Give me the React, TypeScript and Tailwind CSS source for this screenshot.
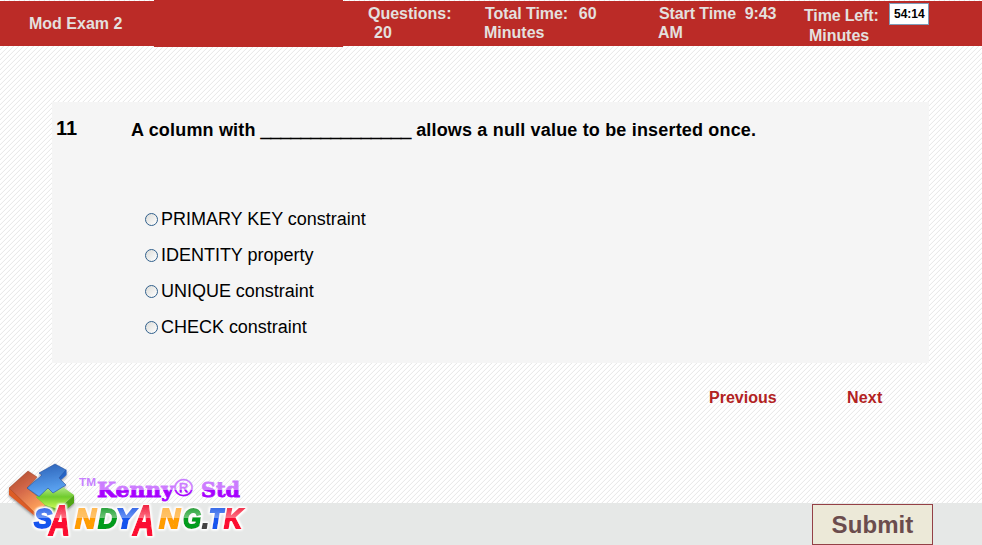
import React from "react";

const options = [
  "PRIMARY KEY constraint",
  "IDENTITY property",
  "UNIQUE constraint",
  "CHECK constraint",
];

const letters = [
  { c: "S", x: 34, y: 527.5, w: 18, fill: "url(#blue)", s: 28 },
  { c: "A", x: 49, y: 535, w: 21, fill: "url(#red)", s: 42 },
  { c: "N", x: 75, y: 527.5, w: 21, fill: "url(#orange)", s: 28 },
  { c: "D", x: 98, y: 527.5, w: 19, fill: "url(#green)", s: 28 },
  { c: "Y", x: 116, y: 527.5, w: 19, fill: "url(#blue)", s: 28 },
  { c: "A", x: 133, y: 535, w: 21, fill: "url(#red)", s: 42 },
  { c: "N", x: 159, y: 527.5, w: 21, fill: "url(#orange)", s: 28 },
  { c: "G", x: 183, y: 527.5, w: 18, fill: "url(#green)", s: 28 },
  { c: ".", x: 202, y: 527.5, w: 7, fill: "#444444", s: 28 },
  { c: "T", x: 209, y: 527.5, w: 14, fill: "url(#blue)", s: 28 },
  { c: "K", x: 224, y: 527.5, w: 18, fill: "url(#red)", s: 28 },
];

function Fade({ id, top, mid, low }: { id: string; top: string; mid: string; low: string }) {
  return (
    <linearGradient id={id} gradientUnits="userSpaceOnUse" x1="0" y1="505" x2="0" y2="532">
      <stop offset="0" stopColor={top} />
      <stop offset="0.48" stopColor={mid} />
      <stop offset="0.5" stopColor={low} />
      <stop offset="1" stopColor={low} />
    </linearGradient>
  );
}

function Stripes() {
  return (
    <svg className="absolute inset-0" width="982" height="545" aria-hidden="true">
      <defs>
        <pattern id="hatch" width="5" height="5" patternUnits="userSpaceOnUse">
          <rect width="5" height="5" fill="#ffffff" />
          {[0, 1, 2, 3, 4].map((n) => (
            <rect key={n} x={4 - n} y={n} width="1" height="1" fill="#eaeaea" shapeRendering="crispEdges" />
          ))}
          {[0, 1, 2, 3, 4].map((n) => (
            <rect key={n} x={(8 - n) % 5} y={n} width="1" height="1" fill="#fbfbfb" shapeRendering="crispEdges" />
          ))}
        </pattern>
      </defs>
      <rect width="982" height="545" fill="url(#hatch)" />
    </svg>
  );
}

function Logo() {
  return (
    <svg className="absolute bottom-0 left-0" width="260" height="90" viewBox="0 455 260 90">
      <defs>
        <Fade id="blue" top="#285fe4" mid="#6b95f5" low="#1955ee" />
        <Fade id="red" top="#f02240" mid="#ff7184" low="#fc0d32" />
        <Fade id="orange" top="#ffb84d" mid="#ffc36b" low="#ff9d00" />
        <Fade id="green" top="#149a28" mid="#6fc57b" low="#009c1c" />
        <linearGradient id="purple" gradientUnits="userSpaceOnUse" x1="0" y1="478" x2="0" y2="501">
          <stop offset="0" stopColor="#c77bff" />
          <stop offset="0.5" stopColor="#cf7cff" />
          <stop offset="0.54" stopColor="#a600ff" />
          <stop offset="1" stopColor="#a600ff" />
        </linearGradient>
        <linearGradient id="cubeRed" x1="0" y1="0" x2="0.6" y2="1">
          <stop offset="0" stopColor="#a8462a" />
          <stop offset="0.5" stopColor="#d5694a" />
          <stop offset="1" stopColor="#ffa35c" />
        </linearGradient>
        <linearGradient id="cubeBlue" x1="0.3" y1="0" x2="0.5" y2="1">
          <stop offset="0" stopColor="#2c62b8" />
          <stop offset="1" stopColor="#62adfa" />
        </linearGradient>
        <linearGradient id="cubeGreen" x1="0" y1="0" x2="0" y2="1">
          <stop offset="0" stopColor="#b5e88c" />
          <stop offset="0.45" stopColor="#6fcb2c" />
          <stop offset="1" stopColor="#cdfb58" />
        </linearGradient>
        <filter id="shade" x="-20%" y="-20%" width="140%" height="150%">
          <feDropShadow dx="0" dy="1.5" stdDeviation="1.3" floodColor="#555" floodOpacity="0.6" />
        </filter>
        <filter id="halo" x="-5%" y="-20%" width="110%" height="140%">
          <feMorphology in="SourceAlpha" operator="dilate" radius="1.2" result="wide" />
          <feGaussianBlur in="wide" stdDeviation="1.1" result="soft" />
          <feFlood floodColor="#ffffff" />
          <feComposite in2="soft" operator="in" result="white" />
          <feMerge>
            <feMergeNode in="white" />
            <feMergeNode in="white" />
            <feMergeNode in="SourceGraphic" />
          </feMerge>
        </filter>
      </defs>
      <g filter="url(#shade)">
        <path d="M9 488L35 509V516L9 495Z" fill="#dc5c26" />
        <path d="M9 488L28 471L37 477L27 488L47 504L35 513Z" fill="url(#cubeRed)" stroke="#933716" strokeWidth="0.4" />
        <path d="M36 497L60 508L74 495V503L58 517L45 505Z" fill="#50a512" />
        <path d="M36 497L47 488L53 493L63 487L74 495L58 509L45 505Z" fill="url(#cubeGreen)" />
        <path d="M61 480L66.500 475V469.500L57 475Z" fill="#2865c6" />
        <path d="M27 488L42 475L39 473L55 464L66 470L59 478L66 485L53 493L48 488L39 496.500Z" fill="url(#cubeBlue)" stroke="#24509f" strokeWidth="0.6" />
      </g>
      <text x="79" y="486" textLength="17" lengthAdjust="spacingAndGlyphs" fill="#c782ff" fontSize="10.500" fontWeight="700" fontFamily="Liberation Sans, sans-serif">TM</text>
      <g fill="url(#purple)" stroke="url(#purple)" fontWeight="700" fontFamily="DejaVu Serif, serif" fontSize="20">
        <text x="97" y="496.500" textLength="77" lengthAdjust="spacingAndGlyphs" strokeWidth="0.8">Kenny</text>
        <text x="174" y="496" textLength="19" lengthAdjust="spacingAndGlyphs" fontWeight="400" fontSize="23" strokeWidth="0.4" fontFamily="Liberation Sans, sans-serif">®</text>
        <text x="201" y="496.500" textLength="39" lengthAdjust="spacingAndGlyphs" strokeWidth="0.8">Std</text>
      </g>
      <g filter="url(#halo)" fontFamily="Liberation Sans, sans-serif" fontWeight="700" fontStyle="italic">
        {letters.map((l, i) => (
          <text key={i} x={l.x} y={l.y} fontSize={l.s} fill={l.fill} stroke={l.fill} strokeWidth="1.9" textLength={l.w} lengthAdjust="spacingAndGlyphs">{l.c}</text>
        ))}
      </g>
    </svg>
  );
}

export default function App() {
  return (
    <div className="relative isolate flex h-[545px] w-[982px] flex-col overflow-hidden bg-white font-['Liberation_Sans',Arial,sans-serif]">
      <div className="absolute inset-0 -z-10"><Stripes /></div>
      <header className="flex h-[47px] shrink-0 text-[16px] leading-[19px] font-bold text-[#e4e0df]">
        <div className="mt-px h-[45px] w-[154px] bg-[#bb2b27] pt-[13px] pl-[29px]">Mod Exam 2</div>
        <div className="h-[47px] w-[189px] bg-[#bb2b27]" />
        <div className="mt-px flex h-[45px] flex-1 bg-[#bb2b27] whitespace-pre">
          <div className="w-[141px] pt-[3px] pl-[25px]">Questions:<div className="pl-[6px]">20</div></div>
          <div className="w-[174px] pt-[3px]"><span className="pl-px tracking-[-0.07px]">Total Time:  <span className="pl-[2px]">60</span></span><div>Minutes</div></div>
          <div className="w-[146px] pt-[3px]"><span className="pl-px tracking-[-0.1px]">Start Time  9:43</span><div>AM</div></div>
          <div className="flex">
            <div className="w-[85px] pt-[5px] leading-[20px] tracking-[-0.15px]">Time Left:<div className="pl-[5px] tracking-[-0.05px]">Minutes</div></div>
            <div className="mt-[2px] h-[22px] w-[40px] border border-[#7f9db9] bg-white pt-px pl-[4px] text-[12px] leading-[19px] text-black">54:14</div>
          </div>
        </div>
      </header>

      <main className="mt-[55px] ml-[52px] h-[261px] w-[877px] shrink-0 bg-[#f5f5f5] text-[18px] text-black">
        <div className="flex font-bold">
          <div className="w-[79px] pt-[15px] pl-[4px] text-[20px] leading-[22px]">11</div>
          <p className="pt-[17px] leading-[22px] tracking-[0.175px] whitespace-nowrap">
            A column with <span className="inline-block translate-y-px tracking-normal [-webkit-text-stroke:0.9px_black]">_______________</span> allows a null value to be inserted once.
          </p>
        </div>
        <div className="mt-[60px] pl-[93px]">
          {options.map((option) => (
            <label key={option} className="flex h-[36px] items-center">
              <input type="radio" name="answer" className="mr-[3px] size-[13px] appearance-none rounded-full border border-[#31608c] bg-linear-to-br from-[#dcdcd8] to-white" />
              <span className="leading-[22px] tracking-[-0.02px]">{option}</span>
            </label>
          ))}
        </div>
      </main>

      <nav className="mt-[25px] flex shrink-0 pl-[709px] text-[16px] leading-[20px] font-bold text-[#b22222]">
        <a className="w-[138px]">Previous</a>
        <a className="tracking-[0.2px]">Next</a>
      </nav>

      <footer className="mt-auto flex h-[42px] shrink-0 bg-[#e6e8e7] pt-px pl-[812px]">
        <button className="h-[41px] w-[121px] border border-[#944046] bg-[#ece9d8] text-[24px] leading-[39px] font-bold tracking-[0.1px] text-[#6b4c4d]">Submit</button>
      </footer>
      <Logo />
    </div>
  );
}
